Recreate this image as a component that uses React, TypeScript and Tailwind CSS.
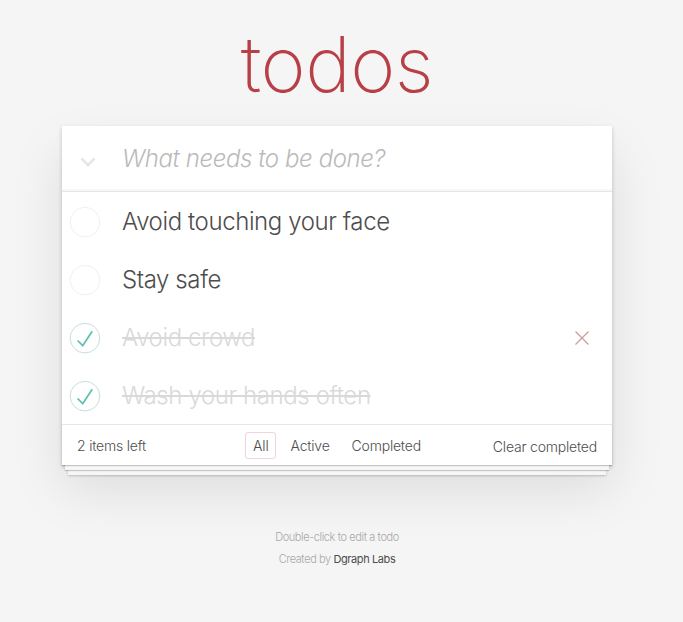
const todos = [
  { title: 'Avoid touching your face', done: false },
  { title: 'Stay safe', done: false },
  { title: 'Avoid crowd', done: true },
  { title: 'Wash your hands often', done: true },
];

function Toggle({ done }: { done: boolean }) {
  return (
    <svg width="40" height="40" viewBox="-10 -18 100 135" className="shrink-0">
      <circle cx="50" cy="50" r="50" fill="none" stroke={done ? '#bddad5' : '#ededed'} strokeWidth="3" />
      {done && <path fill="#5dc2af" d="M72 25L42 71 27 56l-4 4 20 20 34-52z" />}
    </svg>
  );
}

export default function App() {
  return (
    <div className="min-h-[622px] bg-[#f5f5f5] pr-[9px] font-['Inter',sans-serif] font-light text-[14px] text-[#4d4d4d]">
      <div className="mx-auto w-[550px]">
        <h1 className="h-[126px] pt-[24px] text-center text-[77px] leading-[80px] font-extralight text-[#b83f45] tracking-[-0.5px]">
          todos
        </h1>
        <section className="relative bg-white shadow-[0_2px_4px_0_rgba(0,0,0,0.2),0_25px_50px_0_rgba(0,0,0,0.1)]">
          <header className="flex h-[65px] items-center shadow-[inset_0_-2px_1px_rgba(0,0,0,0.03)]">
            <div className="flex w-[52px] justify-center pt-[7px]">
              <svg width="16" height="10" viewBox="0 0 16 10">
                <polyline points="1.5,1.5 8,8 14.5,1.5" fill="none" stroke="#e6e6e6" strokeWidth="2.6" />
              </svg>
            </div>
            <input
              className="ml-[8px] flex-1 bg-transparent text-[24px] italic font-light tracking-[-0.4px] outline-none placeholder:text-[#bababa] pr-4"
              placeholder="What needs to be done?"
            />
          </header>
          <ul className="border-t border-[#e6e6e6]">
            {todos.map((t) => (
              <li key={t.title} className="flex h-[58px] items-center pt-[2px]">
                <Toggle done={t.done} />
                <span
                  className={
                    t.done
                      ? 'ml-[20px] flex-1 text-[24px] tracking-[-0.4px] text-[#d9d9d9] line-through decoration-[1.5px]'
                      : 'ml-[20px] flex-1 text-[24px] tracking-[-0.4px] text-[#4d4d4d]'
                  }
                >
                  {t.title}
                </span>
                {t.title === 'Avoid crowd' && (
                  <div className="mr-[10px] flex h-[40px] w-[40px] items-center justify-center">
                    <svg width="16" height="16" viewBox="0 0 16 16">
                      <path d="M1.5 1.5L14.5 14.5M14.5 1.5L1.5 14.5" stroke="#cc9a9a" strokeWidth="1.2" />
                    </svg>
                  </div>
                )}
              </li>
            ))}
          </ul>
          <footer className="relative flex h-[41px] items-center border-t border-[#e6e6e6] px-[15px] text-[14px] tracking-[-0.2px] shadow-[0_1px_1px_rgba(0,0,0,0.2),0_8px_0_-3px_#f6f6f6,0_9px_1px_-3px_rgba(0,0,0,0.2),0_16px_0_-6px_#f6f6f6,0_17px_2px_-6px_rgba(0,0,0,0.2)]">
            <span className="flex-1 text-[#4d4d4d]">2 items left</span>
            <ul className="absolute left-0 right-0 flex justify-center gap-[6px] pointer-events-none">
              <li className="rounded-[3px] border border-[rgba(175,47,47,0.2)] px-[7px] leading-[25px]">All</li>
              <li className="rounded-[3px] border border-transparent px-[7px] leading-[25px]">Active</li>
              <li className="rounded-[3px] border border-transparent px-[7px] leading-[25px]">Completed</li>
            </ul>
            <span className="pt-[2px] text-[#4d4d4d]">Clear completed</span>
          </footer>
        </section>
        <div className="mt-[67px] text-center text-[11px] leading-[11px] tracking-[-0.4px] text-[#a8a8a8]">
          <p>Double-click to edit a todo</p>
          <p className="mt-[11px]">
            Created by <span className="font-normal text-[#4d4d4d]">Dgraph Labs</span>
          </p>
        </div>
      </div>
    </div>
  );
}
